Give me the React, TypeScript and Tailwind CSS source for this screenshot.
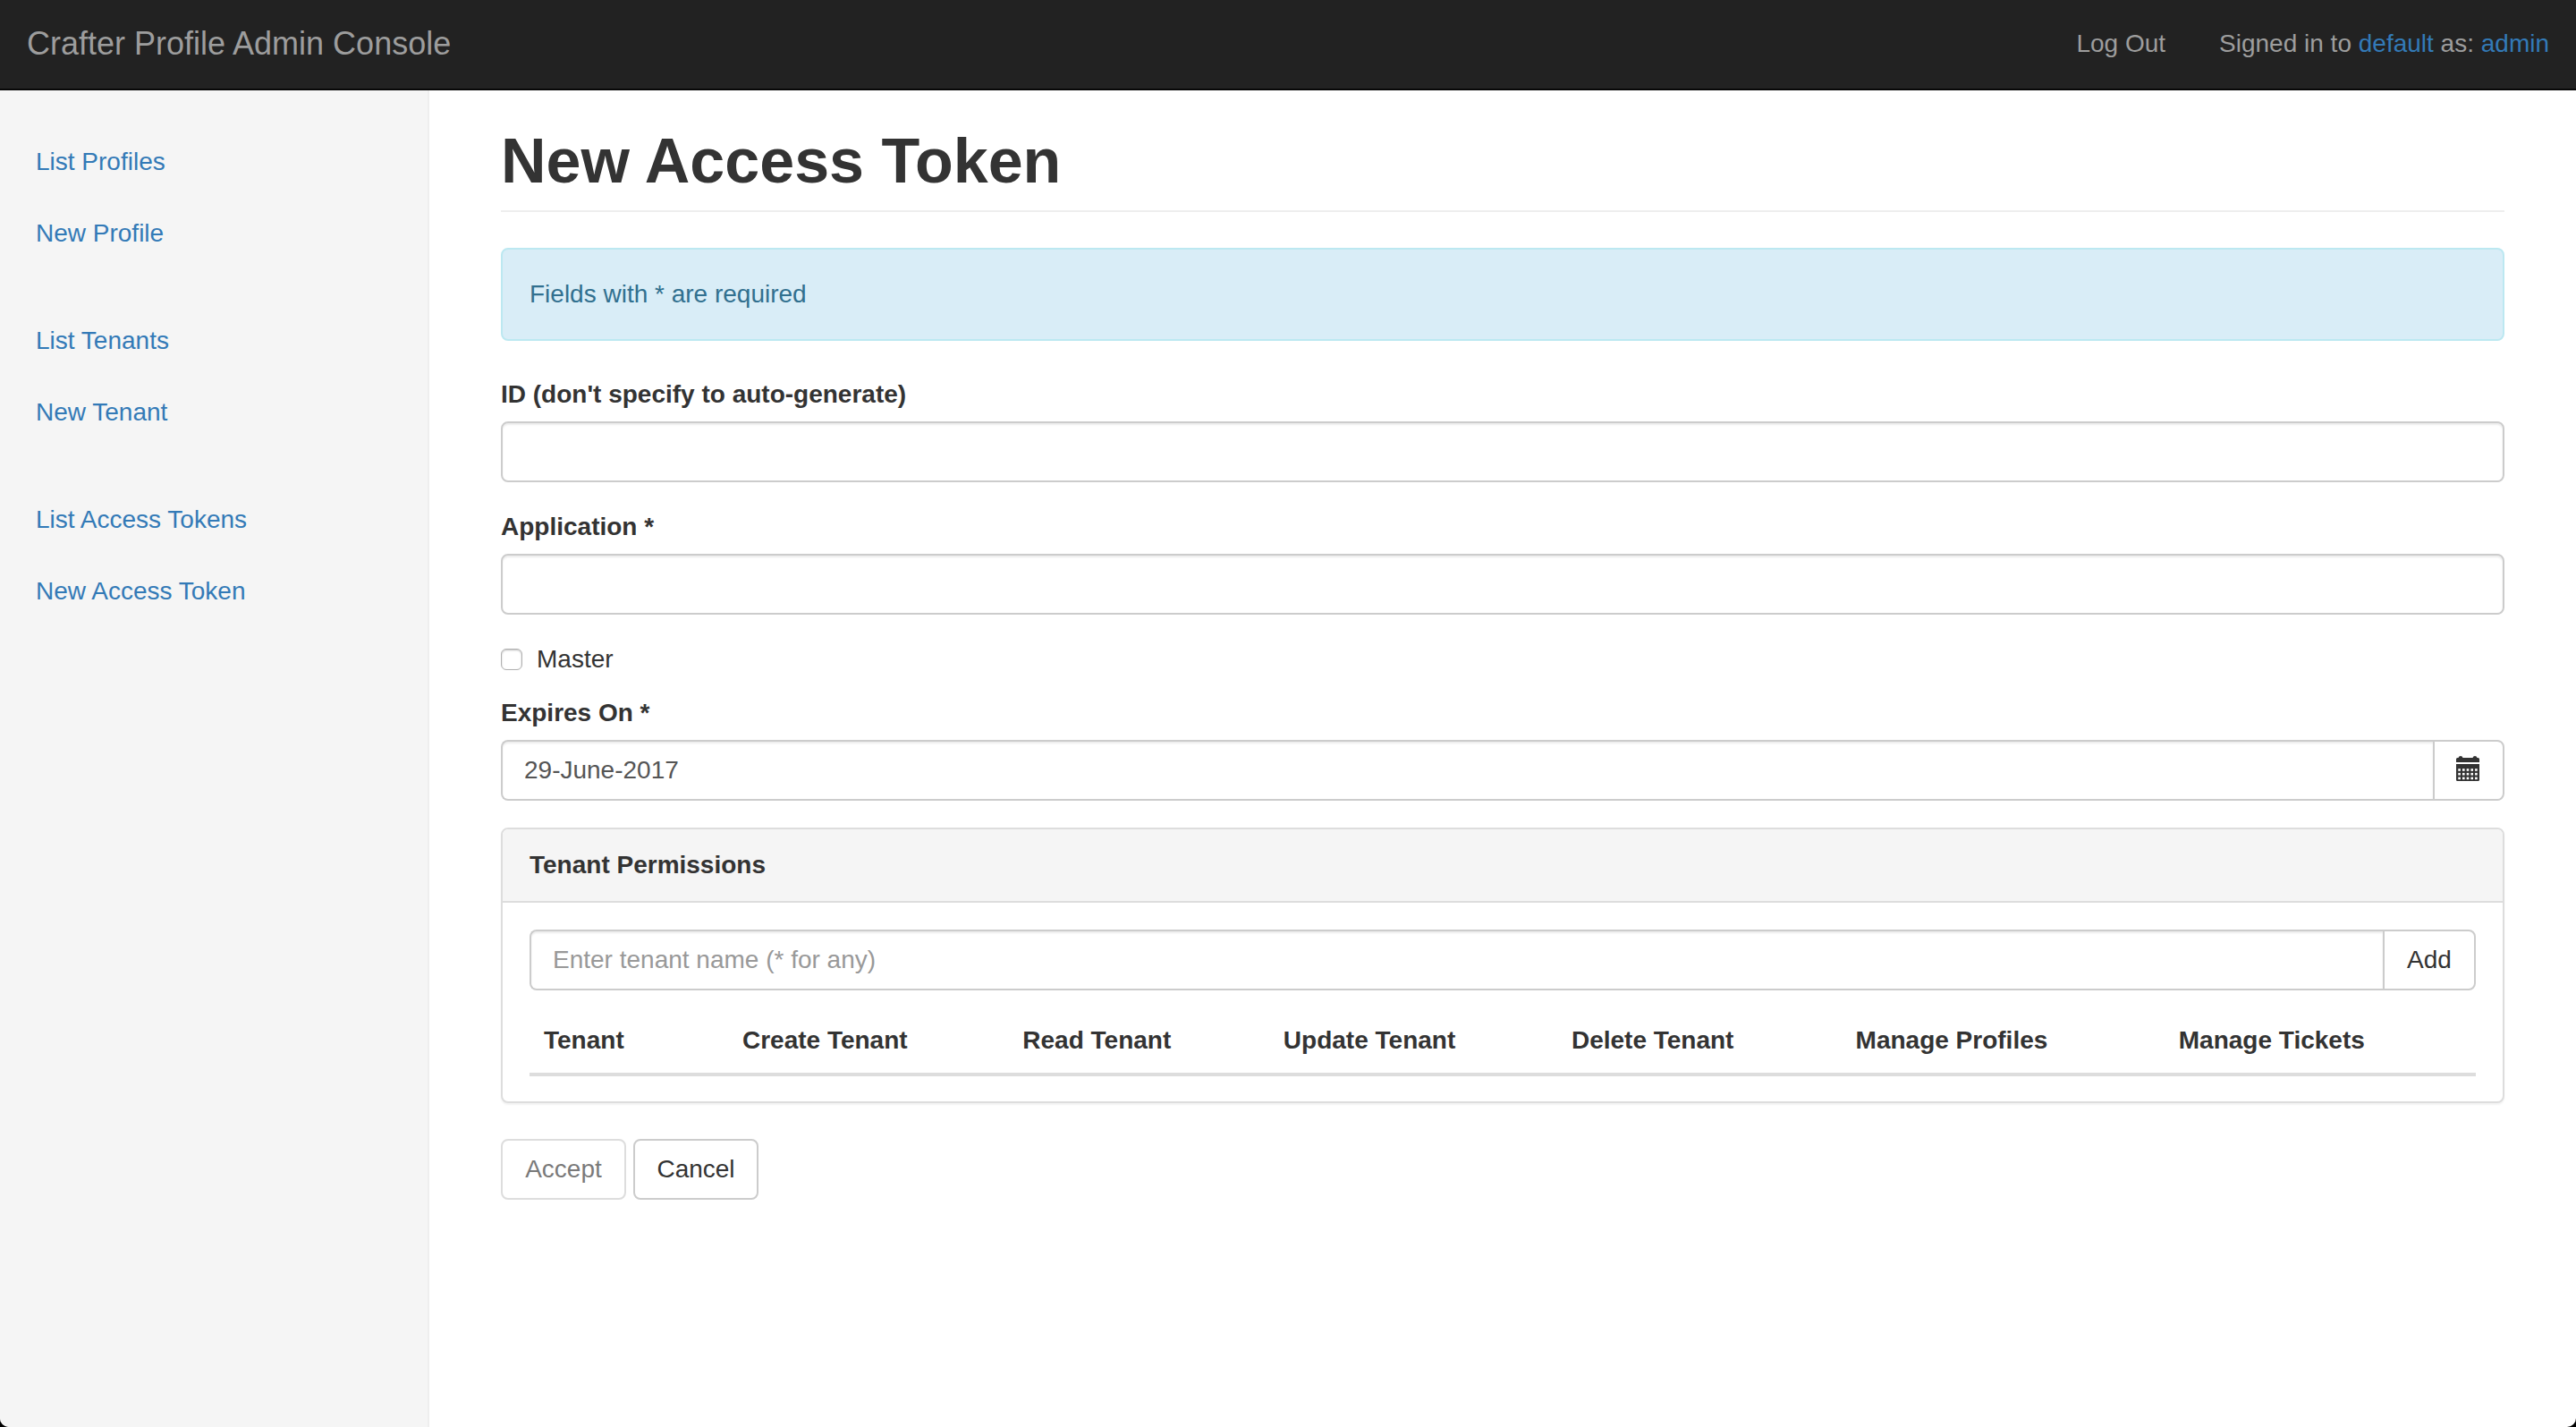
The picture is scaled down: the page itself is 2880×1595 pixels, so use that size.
import React, { useState } from "react";

const navGroups = [
  ["List Profiles", "New Profile"],
  ["List Tenants", "New Tenant"],
  ["List Access Tokens", "New Access Token"],
];

const columns = [
  { title: "Tenant", width: "w-[10.2%]" },
  { title: "Create Tenant", width: "w-[14.4%]" },
  { title: "Read Tenant", width: "w-[13.4%]" },
  { title: "Update Tenant", width: "w-[14.8%]" },
  { title: "Delete Tenant", width: "w-[14.6%]" },
  { title: "Manage Profiles", width: "w-[16.6%]" },
  { title: "Manage Tickets", width: "w-[16%]" },
];

const fieldClass =
  "h-[68px] w-full min-w-0 border-2 border-[#ccc] bg-white px-6 text-[#555] shadow-[inset_0_2px_2px_rgba(0,0,0,0.075)] outline-none placeholder:text-[#999]";

const dayColumns = [2.3, 7, 11.7, 16.4, 21.1];
const dayRows = [14.2, 18.9, 23.6];

function CalendarIcon() {
  return (
    <svg width="26" height="28" viewBox="0 0 26 28" fill="#333" aria-hidden="true">
      <path d="M0 7V3.5Q0 2 1.5 2H2.5Q3 0 5 0T7.5 2H18.5Q19 0 21 0T23.5 2H24.5Q26 2 26 3.5V7Z" />
      <path d="M0 9H26V26.500Q26 28 24.500 28H1.500Q0 28 0 26.500Z" />
      {dayRows.map((y) =>
        dayColumns.map((x) => <rect key={`${x}-${y}`} x={x} y={y} width="2.6" height="2.6" fill="#fff" />),
      )}
    </svg>
  );
}

function Header() {
  return (
    <header className="flex items-center justify-between border-b-2 border-[#080808] bg-[#222] px-[30px] pt-[29px] pb-[30px] text-[#9d9d9d]">
      <a href="#" className="text-[36px] leading-[40px]">
        Crafter Profile Admin Console
      </a>
      <nav className="flex gap-[60px]">
        <a href="#">Log Out</a>
        <p>
          Signed in to{" "}
          <a href="#" className="text-[#337ab7]">
            default
          </a>{" "}
          as:{" "}
          <a href="#" className="text-[#337ab7]">
            admin
          </a>
        </p>
      </nav>
    </header>
  );
}

function Sidebar() {
  return (
    <nav className="w-1/6 shrink-0 border-r-2 border-[#eee] bg-[#f5f5f5] pt-10">
      {navGroups.map((group) => (
        <ul key={group[0]} className="mb-10">
          {group.map((item) => (
            <li key={item}>
              <a href="#" className="block px-10 py-5 text-[#337ab7]">
                {item}
              </a>
            </li>
          ))}
        </ul>
      ))}
    </nav>
  );
}

export default function App() {
  const [id, setId] = useState("");
  const [application, setApplication] = useState("");
  const [master, setMaster] = useState(false);
  const [expires, setExpires] = useState("29-June-2017");
  const [tenant, setTenant] = useState("");

  return (
    <div className="bg-black">
      <div className="flex min-h-screen flex-col overflow-hidden rounded-b-[10px] bg-white font-['Liberation_Sans',Arial,sans-serif] text-[28px] leading-[40px] text-[#333]">
        <Header />
        <div className="flex grow">
          <Sidebar />
          <main className="min-w-0 grow px-20 pt-10">
            <h1 className="border-b-2 border-[#eee] pb-4 text-[70px] leading-[78px] font-bold">New Access Token</h1>
            <p className="mt-10 rounded-lg border-2 border-[#bce8f1] bg-[#d9edf7] p-[30px] text-[#31708f]">
              Fields with * are required
            </p>
            <form className="mt-10" onSubmit={(e) => e.preventDefault()}>
              <div className="mb-[30px]">
                <label htmlFor="token-id" className="mb-2.5 block font-bold">
                  ID (don't specify to auto-generate)
                </label>
                <input
                  id="token-id"
                  type="text"
                  className={`${fieldClass} block rounded-lg`}
                  value={id}
                  onChange={(e) => setId(e.target.value)}
                />
              </div>
              <div className="mb-[30px]">
                <label htmlFor="application" className="mb-2.5 block font-bold">
                  Application *
                </label>
                <input
                  id="application"
                  type="text"
                  className={`${fieldClass} block rounded-lg`}
                  value={application}
                  onChange={(e) => setApplication(e.target.value)}
                />
              </div>
              <label className="mb-5 flex w-fit items-center gap-4">
                <input
                  type="checkbox"
                  className="size-6 appearance-none rounded-md border border-[#b0b0b0] bg-white shadow-[inset_0_1px_2px_rgba(0,0,0,0.25)] checked:bg-[#337ab7]"
                  checked={master}
                  onChange={(e) => setMaster(e.target.checked)}
                />
                Master
              </label>
              <div className="mb-[30px]">
                <label htmlFor="expires" className="mb-2.5 block font-bold">
                  Expires On *
                </label>
                <div className="flex">
                  <input
                    id="expires"
                    type="text"
                    className={`${fieldClass} rounded-l-lg border-r-0`}
                    value={expires}
                    onChange={(e) => setExpires(e.target.value)}
                  />
                  <button
                    type="button"
                    aria-label="Pick a date"
                    className="flex h-[68px] w-20 shrink-0 items-center rounded-r-lg border-2 border-[#ccc] bg-white pb-1 pl-6"
                  >
                    <CalendarIcon />
                  </button>
                </div>
              </div>
              <section className="mb-10 rounded-lg border-2 border-[#ddd] bg-white shadow-[0_2px_2px_rgba(0,0,0,0.05)]">
                <h2 className="rounded-t-md border-b-2 border-[#ddd] bg-[#f5f5f5] px-[30px] py-5 font-bold">
                  Tenant Permissions
                </h2>
                <div className="px-[30px] pt-[30px] pb-7">
                  <div className="mb-5 flex">
                    <input
                      type="text"
                      aria-label="Tenant name"
                      placeholder="Enter tenant name (* for any)"
                      className={`${fieldClass} rounded-l-lg border-r-0`}
                      value={tenant}
                      onChange={(e) => setTenant(e.target.value)}
                    />
                    <button
                      type="button"
                      className="h-[68px] w-[104px] shrink-0 rounded-r-lg border-2 border-[#ccc] bg-white"
                    >
                      Add
                    </button>
                  </div>
                  <table className="w-full table-fixed border-separate border-spacing-0">
                    <thead>
                      <tr>
                        {columns.map((c) => (
                          <th
                            key={c.title}
                            scope="col"
                            className={`${c.width} border-b-4 border-[#ddd] p-4 text-left font-bold`}
                          >
                            {c.title}
                          </th>
                        ))}
                      </tr>
                    </thead>
                  </table>
                </div>
              </section>
              <div className="flex gap-2">
                <button
                  type="submit"
                  disabled
                  className="h-[68px] w-[140px] rounded-lg border-2 border-[#ccc] bg-white opacity-65"
                >
                  Accept
                </button>
                <button type="button" className="h-[68px] w-[140px] rounded-lg border-2 border-[#ccc] bg-white">
                  Cancel
                </button>
              </div>
            </form>
          </main>
        </div>
      </div>
    </div>
  );
}
